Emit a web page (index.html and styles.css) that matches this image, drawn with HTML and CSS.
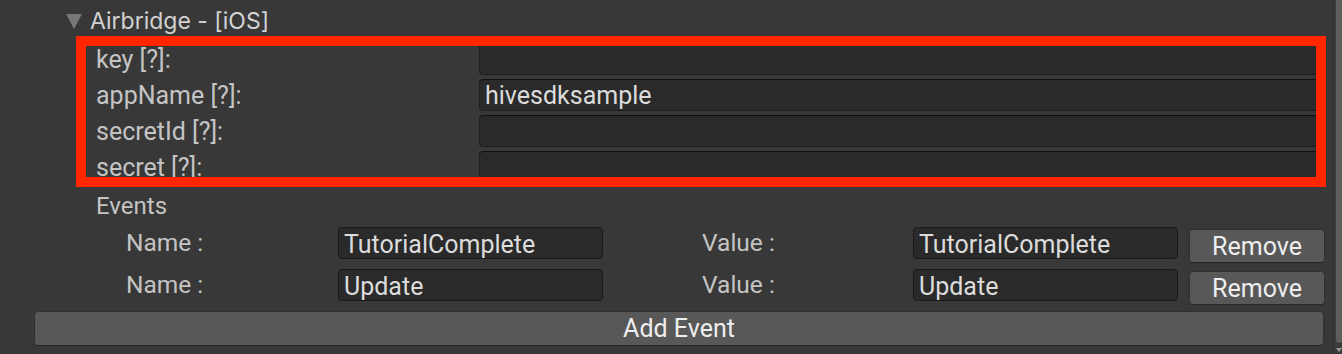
FILE: index.html
```html
<!DOCTYPE html>
<html lang="en">
<head>
    <meta charset="UTF-8">
    <title>Airbridge - [iOS]</title>
    <link rel="stylesheet" href="styles.css">
</head>
<body>
    <div class="page">
        <div class="inspector">
            <!-- Foldout header -->
            <div class="foldout">
                <span class="arrow"></span>
                <span class="foldout-title">Airbridge - [iOS]</span>
            </div>

            <!-- Highlighted settings block -->
            <div class="highlight">
                <div class="settings">
                    <div class="field-row">
                        <span class="label">key [?]:</span>
                        <div class="text-field"></div>
                    </div>
                    <div class="field-row">
                        <span class="label">appName [?]:</span>
                        <div class="text-field">hivesdksample</div>
                    </div>
                    <div class="field-row">
                        <span class="label">secretId [?]:</span>
                        <div class="text-field"></div>
                    </div>
                    <div class="field-row">
                        <span class="label">secret [?]:</span>
                        <div class="text-field"></div>
                    </div>
                </div>
            </div>

            <!-- Events list -->
            <div class="events-title">Events</div>
            <div class="event-row">
                <span class="event-label">Name :</span>
                <div class="event-field">TutorialComplete</div>
                <span></span>
                <span class="event-label">Value :</span>
                <div class="event-field">TutorialComplete</div>
                <button class="btn remove">Remove</button>
            </div>
            <div class="event-row">
                <span class="event-label">Name :</span>
                <div class="event-field">Update</div>
                <span></span>
                <span class="event-label">Value :</span>
                <div class="event-field">Update</div>
                <button class="btn remove">Remove</button>
            </div>
            <button class="btn add-event">Add Event</button>
        </div>

        <div class="scrollbar">
            <div class="thumb"></div>
            <div class="scroll-arrow"></div>
        </div>
    </div>
</body>
</html>
```

FILE: styles.css
```css
body {
    margin: 0;
    background-color: #383838;
    font-family: Roboto, "Noto Sans", sans-serif;
    font-size: 24px;
    color: #c4c4c4;
    overflow: hidden;
}
.page {
    display: flex;
    height: 354px;
}
.inspector {
    flex: 1;
}

/* Foldout header */
.foldout {
    display: flex;
    align-items: center;
    height: 31px;
    padding-top: 5px;
    padding-left: 66px;
}
.arrow {
    width: 0;
    height: 0;
    border-left: 8px solid transparent;
    border-right: 8px solid transparent;
    border-top: 15px solid #777777;
    margin-right: 8px;
    margin-top: 2px;
}
.foldout-title {
    font-family: Inter, "Noto Sans", sans-serif;
    font-size: 23px;
    color: #d2d2d2;
}

/* Red highlight box */
.highlight {
    margin-left: 76px;
    width: 1230px;
    height: 131px;
    border: 10px solid #ff2600;
    overflow: hidden;
}
.settings {
    margin-top: -3px;
    padding-left: 10px;
}
.field-row {
    display: grid;
    grid-template-columns: 383px 1fr;
    align-items: center;
    height: 32px;
    margin-bottom: 4px;
}
.label {
    font-size: 25px;
}
.text-field {
    height: 30px;
    margin-right: -10px;
    background-color: #2a2a2a;
    border: 1px solid #1e1e1e;
    border-top-color: #0f0f0f;
    border-radius: 4px;
    padding-left: 5px;
    font-size: 25px;
    line-height: 32px;
    color: #dcdcdc;
}

/* Events */
.events-title {
    height: 34px;
    line-height: 34px;
    margin-top: 2px;
    padding-left: 96px;
}
.event-row {
    display: grid;
    grid-template-columns: 212px 265px 99px 211px 265px 147px;
    align-items: start;
    height: 42px;
    padding-left: 126px;
    margin-top: 4px;
}
.event-row + .event-row {
    margin-top: 0;
}
.event-label {
    font-size: 24.5px;
    line-height: 32px;
}
.event-field {
    height: 30px;
    line-height: 34px;
    background-color: #2a2a2a;
    border: 1px solid #1a1a1a;
    border-radius: 4px;
    padding-left: 5px;
    font-size: 25px;
    color: #dcdcdc;
}
.btn {
    font-family: Roboto, "Noto Sans", sans-serif;
    font-size: 25px;
    color: #eeeeee;
    background-color: #585858;
    border: 1px solid #303030;
    border-bottom-color: #262626;
    border-radius: 4px;
    padding: 0;
}
.remove {
    margin-left: 11px;
    margin-top: 2px;
    width: 136px;
    height: 34px;
}
.add-event {
    display: block;
    margin-left: 34px;
    width: 1290px;
    height: 35px;
}

/* Scrollbar strip on the right */
.scrollbar {
    width: 8px;
    border-left: 1px solid #2f2f2f;
    position: relative;
    background-color: #3a3a3a;
}
.thumb {
    height: 343px;
    margin-left: 2px;
    background-color: #5e5e5e;
    border-radius: 0 0 4px 4px;
}
.scroll-arrow {
    position: absolute;
    left: 2px;
    bottom: 2px;
    width: 0;
    height: 0;
    border-left: 3px solid transparent;
    border-right: 3px solid transparent;
    border-top: 4px solid #9a9a9a;
}
```
